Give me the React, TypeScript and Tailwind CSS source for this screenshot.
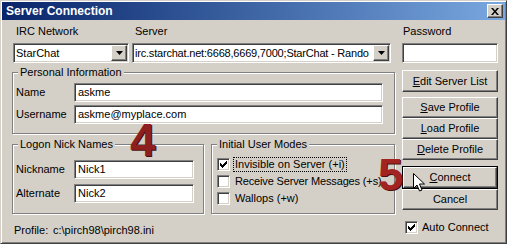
import React from "react";

const sunken =
  "bg-white border border-t-[#808080] border-l-[#808080] border-b-white border-r-white shadow-[inset_1px_1px_0_#404040,inset_-1px_-1px_0_#d4d0c8]";
const raised =
  "bg-[#d4d0c8] border border-t-white border-l-white border-b-[#404040] border-r-[#404040] shadow-[inset_-1px_-1px_0_#808080]";
const etched = "border border-[#808080] shadow-[inset_1px_1px_0_#fff,1px_1px_0_#fff]";

const Check = () => (
  <svg width="7" height="7" viewBox="0 0 7 7">
    {[2, 3, 4, 3, 2, 1, 0].map((y, x) => (
      <rect key={x} x={x} y={y} width="1" height="3" fill="#000" />
    ))}
  </svg>
);

const CheckBox = ({ checked }: { checked?: boolean }) => (
  <div className={`w-[13px] h-[13px] flex items-center justify-center shrink-0 ${sunken}`}>
    {checked && <Check />}
  </div>
);

const Combo = ({ text, className }: { text: string; className: string }) => (
  <div className={`h-[20px] flex items-center ${sunken} ${className}`}>
    <div className="flex-1 pl-[2px] overflow-hidden whitespace-nowrap">{text}</div>
    <div className={`w-[16px] h-[16px] mr-[1px] flex items-center justify-center shrink-0 ${raised}`}>
      <svg width="7" height="4" viewBox="0 0 7 4">
        <path d="M0 0h7L3.5 4z" fill="#000" />
      </svg>
    </div>
  </div>
);

const Field = ({ value, className }: { value: string; className: string }) => (
  <div className={`h-[19px] flex items-center pl-[3px] ${sunken} ${className}`}>{value}</div>
);

const Btn = ({ children, h = "h-[21px]" }: { children: React.ReactNode; h?: string }) => (
  <div className={`${h} flex items-center justify-center ${raised}`}>{children}</div>
);

const Legend = ({ children }: { children: React.ReactNode }) => (
  <span className="-mt-[7px] ml-[5px] px-[2px] self-start bg-[#d4d0c8] leading-[13px]">{children}</span>
);

export default function App() {
  return (
    <div className="relative w-[507px] h-[244px] overflow-hidden bg-[#d4d0c8] text-[11px] leading-[13px] text-black font-['Liberation_Sans',Arial,sans-serif]">
      <div className="w-[507px] h-[244px] flex flex-col p-[1px] border border-t-[#d4d0c8] border-l-[#d4d0c8] border-b-[#404040] border-r-[#404040] shadow-[inset_1px_1px_0_#fff,inset_-1px_-1px_0_#808080]">
        {/* title bar */}
        <div className="h-[18px] flex items-center justify-between pl-[4px] pr-[2px] bg-gradient-to-r from-[#0a246a] to-[#7aa8e0]">
          <span className="text-white font-bold text-[12px]">Server Connection</span>
          <div className={`w-[16px] h-[14px] flex items-center justify-center ${raised}`}>
            <svg width="8" height="7" viewBox="0 0 8 7">
              <path d="M0 0h2l2 2.5L6 0h2L5 3.5 8 7H6L4 4.5 2 7H0l3-3.5z" fill="#000" />
            </svg>
          </div>
        </div>

        <div className="flex gap-[7px] pl-[10px]">
          {/* left column */}
          <div className="w-[383px] flex flex-col">
            <div className="flex mt-[5px]">
              <span className="w-[120px] pl-[4px]">IRC Network</span>
              <span className="pl-[3px]">Server</span>
            </div>
            <div className="flex mt-[5px] ml-[1px] gap-[3px]">
              <Combo text="StarChat" className="w-[116px]" />
              <Combo text="irc.starchat.net:6668,6669,7000;StarChat - Rando" className="w-[259px] tracking-[-0.2px]" />
            </div>

            <div className={`mt-[9px] h-[62px] flex flex-col ${etched}`}>
              <Legend>Personal Information</Legend>
              <div className="flex items-center mt-[4px]">
                <span className="w-[61px] pl-[3px]">Name</span>
                <Field value="askme" className="w-[309px]" />
              </div>
              <div className="flex items-center mt-[3px]">
                <span className="w-[61px] pl-[3px]">Username</span>
                <Field value="askme@myplace.com" className="w-[309px]" />
              </div>
            </div>

            <div className="flex gap-[7px] mt-[10px]">
              <div className={`w-[192px] h-[70px] flex flex-col ${etched}`}>
                <Legend>Logon Nick Names</Legend>
                <div className="flex items-center mt-[9px]">
                  <span className="w-[61px] pl-[3px]">Nickname</span>
                  <Field value="Nick1" className="w-[120px]" />
                </div>
                <div className="flex items-center mt-[5px]">
                  <span className="w-[61px] pl-[3px]">Alternate</span>
                  <Field value="Nick2" className="w-[120px]" />
                </div>
              </div>
              <div className={`w-[184px] h-[70px] flex flex-col ${etched}`}>
                <Legend>Initial User Modes</Legend>
                <div className="flex flex-col gap-[4px] mt-[7px] pl-[5px]">
                  <div className="flex items-center gap-[4px]">
                    <CheckBox checked />
                    <span className="px-[1px] outline-1 outline-dotted outline-black">Invisible on Server (+i)</span>
                  </div>
                  <div className="flex items-center gap-[5px]">
                    <CheckBox />
                    <span className="tracking-[-0.15px]">Receive Server Messages (+s)</span>
                  </div>
                  <div className="flex items-center gap-[5px]">
                    <CheckBox />
                    <span>Wallops (+w)</span>
                  </div>
                </div>
              </div>
            </div>

            <div className="flex mt-[10px] pl-[2px]">
              <span className="w-[39px]">Profile:</span>
              <span>c:\pirch98\pirch98.ini</span>
            </div>
          </div>

          {/* right column */}
          <div className="w-[96px] flex flex-col">
            <span className="mt-[5px] pl-[1px]">Password</span>
            <div className={`h-[20px] mt-[5px] ${sunken}`} />
            <div className="mt-[7px]">
              <Btn h="h-[22px]">
                <span><span className="underline">E</span>dit Server List</span>
              </Btn>
            </div>
            <div className="mt-[5px] flex flex-col">
              <Btn>
                <span><span className="underline">S</span>ave Profile</span>
              </Btn>
              <Btn>
                <span><span className="underline">L</span>oad Profile</span>
              </Btn>
              <Btn>
                <span><span className="underline">D</span>elete Profile</span>
              </Btn>
            </div>
            <div className="mt-[6px] border border-black">
              <Btn>
                <span><span className="underline">C</span>onnect</span>
              </Btn>
            </div>
            <Btn>
              <span>Cancel</span>
            </Btn>
            <div className="flex items-center gap-[4px] mt-[11px] pl-[3px]">
              <CheckBox checked />
              <span>Auto Connect</span>
            </div>
          </div>
        </div>
      </div>

      {/* annotations */}
      <span className="absolute left-[130px] top-[117px] text-[46px] leading-none font-bold text-[#8e1f1f] [text-shadow:1px_1px_0_#4a0d0d]">
        4
      </span>
      <span className="absolute left-[378px] top-[152px] text-[45px] leading-none font-bold text-[#a32320] [text-shadow:1px_1px_0_#4a0d0d]">
        5
      </span>
      <svg className="absolute left-[413px] top-[173px]" width="13" height="20" viewBox="0 0 13 20">
        <path d="M0.5 0.5v15l3.5-3.5 2.5 6 2.5-1-2.5-6h5z" fill="#fff" stroke="#000" strokeWidth="1" />
      </svg>
    </div>
  );
}
